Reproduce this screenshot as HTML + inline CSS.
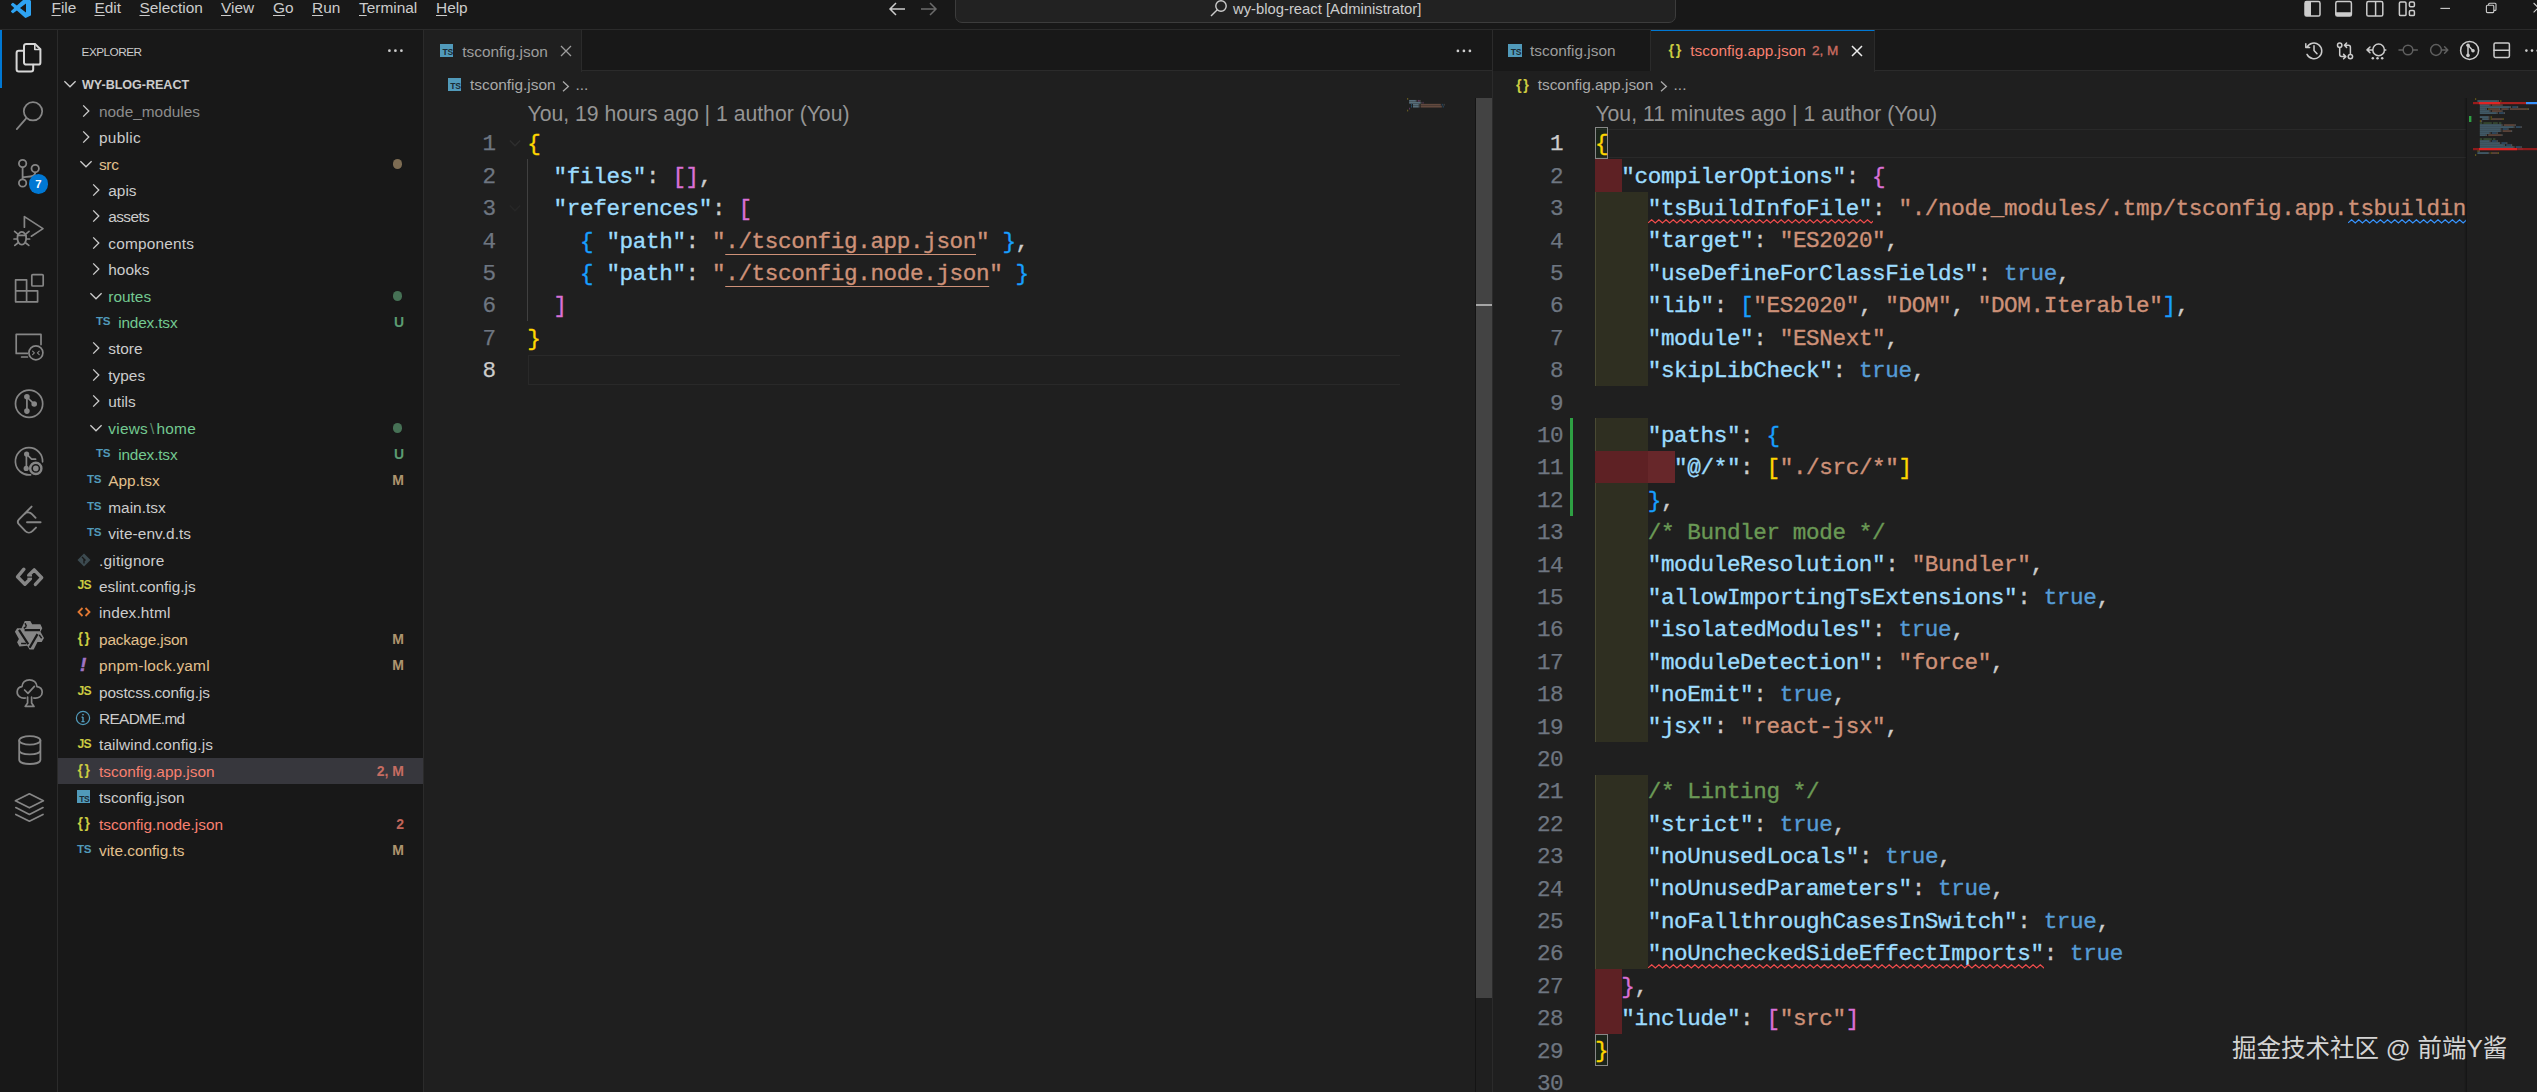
<!DOCTYPE html>
<html lang="en"><head><meta charset="utf-8"><title>tsconfig.app.json - wy-blog-react - Visual Studio Code</title>
<style>
*{box-sizing:border-box;margin:0;padding:0}
html,body{width:2537px;height:1092px;overflow:hidden;background:#181818;}
body{position:relative;font-family:"Liberation Sans", sans-serif;font-size:15.4px;color:#cccccc;-webkit-font-smoothing:antialiased}
.abs{position:absolute}
#titlebar{position:absolute;left:0;top:0;width:2537px;height:30px;background:#181818;border-bottom:1px solid #2b2b2b}
.menu{position:absolute;top:-2.7px;height:22px;line-height:22px;font-size:15.4px;color:#cccccc;white-space:nowrap}
.menu u{text-decoration:underline;text-underline-offset:2.3px;text-decoration-thickness:1.1px}
#cmd{position:absolute;left:955px;top:-9.4px;width:721px;height:32px;border:1px solid #3c3c3c;border-radius:7px;background:#222222}
#cmdtxt{position:absolute;left:1233px;top:-2px;height:22px;line-height:22px;font-size:14.8px;color:#cccccc;white-space:nowrap}
#activity{position:absolute;left:0;top:30px;width:58px;height:1062px;background:#181818;border-right:1px solid #2b2b2b}
#sidebar{position:absolute;left:58px;top:30px;width:366px;height:1062px;background:#181818;border-right:1px solid #2b2b2b}
.row{position:absolute;left:0;width:365px;height:26.4px;line-height:26.4px;white-space:nowrap;font-size:15.4px}
.row .lbl{position:absolute;top:1.2px}
.row .badge{position:absolute;right:19px;top:0.1px;font-size:14px;font-weight:bold;text-align:right}
.row .dot{position:absolute;left:334.8px;top:8.7px;width:9.4px;height:9.4px;border-radius:50%;opacity:.5}
.ic{position:absolute}
.ed{position:absolute;top:30px;height:1062px;background:#1f1f1f;overflow:hidden}
.tabs{position:absolute;left:0;top:0;right:0;height:41px;background:#181818;border-bottom:1px solid #2b2b2b}
.tab{position:absolute;top:0;height:41px;border-right:1px solid #2b2b2b;line-height:41px;font-size:15.4px;white-space:nowrap}
.crumb{position:absolute;left:0;right:0;top:41px;height:27px;line-height:27px;font-size:15.4px;color:#a9a9a9;white-space:nowrap}
.ln{position:absolute;padding-top:1.5px;height:32.4px;line-height:32.4px;font-family:"Liberation Mono", monospace;font-size:22.6px;letter-spacing:-0.36px;-webkit-text-stroke:0.25px;color:#6e7681;text-align:right;white-space:pre}
.cl{position:absolute;padding-top:1.5px;height:32.4px;line-height:32.4px;font-family:"Liberation Mono", monospace;font-size:22.6px;color:#cccccc;white-space:pre;letter-spacing:-0.36px;-webkit-text-stroke:0.35px}
.lens{position:absolute;height:32px;line-height:32px;font-size:21.2px;color:#959595;white-space:nowrap}
.k{color:#9cdcfe} .s{color:#ce9178} .b{color:#569cd6} .c{color:#6a9955}
.y{color:#ffd700} .p{color:#da70d6} .bl{color:#179fff}
.sqb{text-decoration:underline wavy #3794ff;text-decoration-thickness:1px;text-underline-offset:5px;text-decoration-skip-ink:none}
.sq{text-decoration:underline wavy #f14c4c;text-decoration-thickness:1px;text-underline-offset:5px;text-decoration-skip-ink:none}
.lk{text-decoration:underline;text-decoration-thickness:1.2px;text-underline-offset:6px;text-decoration-skip-ink:none}
</style></head>
<body>
<div id="titlebar">
<svg class="abs" style="left:10.5px;top:-1.9px" width="20" height="20" viewBox="0 0 24 24"><path fill="#2ea3f2" d="M23.15 2.587L18.21.21a1.494 1.494 0 0 0-1.705.29l-9.46 8.63-4.12-3.128a.999.999 0 0 0-1.276.057L.327 7.261A1 1 0 0 0 .326 8.74L3.899 12 .326 15.26a1 1 0 0 0 .001 1.479L1.65 17.94a.999.999 0 0 0 1.276.057l4.12-3.128 9.46 8.63a1.492 1.492 0 0 0 1.704.29l4.942-2.377A1.5 1.5 0 0 0 24 20.06V3.939a1.5 1.5 0 0 0-.85-1.352zm-5.146 14.861L10.826 12l7.178-5.448v10.896z"/></svg>
<div class="menu" style="left:51.5px"><u>F</u>ile</div>
<div class="menu" style="left:94.5px"><u>E</u>dit</div>
<div class="menu" style="left:139.5px"><u>S</u>election</div>
<div class="menu" style="left:221px"><u>V</u>iew</div>
<div class="menu" style="left:273px"><u>G</u>o</div>
<div class="menu" style="left:312px"><u>R</u>un</div>
<div class="menu" style="left:359px"><u>T</u>erminal</div>
<div class="menu" style="left:436px"><u>H</u>elp</div>
<svg class="abs" style="left:886px;top:0px" width="54" height="18" viewBox="0 0 54 18" fill="none" stroke-width="1.5"><path d="M19 9 H4 M10 3 L4 9 L10 15" stroke="#cccccc"/><path d="M35 9 H50 M44 3 L50 9 L44 15" stroke="#6b6b6b"/></svg>
<div id="cmd"></div>
<svg class="abs" style="left:1209px;top:-1px" width="20" height="20" viewBox="0 0 20 20" fill="none" stroke="#cccccc" stroke-width="1.4"><circle cx="12" cy="7" r="5.2"/><path d="M8.3 10.7 L2 17"/></svg>
<div id="cmdtxt">wy-blog-react [Administrator]</div>
<svg class="abs" style="left:2295px;top:0" width="242" height="29" viewBox="2295 0 242 29" fill="none" stroke="#cccccc" stroke-width="1.5">
<rect x="2305" y="1.6" width="15" height="14.4" rx="1.6"/><path d="M2305 3 a1.4 1.4 0 0 1 1.4 -1.4 H2311 V16 H2306.4 a1.4 1.4 0 0 1 -1.4 -1.4 Z" fill="#cccccc" stroke="none"/>
<rect x="2335.8" y="1.6" width="15.6" height="14.4" rx="1.6"/><path d="M2335.8 12.2 H2351.4 V14.6 a1.4 1.4 0 0 1 -1.4 1.4 H2337.2 a1.4 1.4 0 0 1 -1.4 -1.4 Z" fill="#cccccc" stroke="none"/>
<rect x="2366.8" y="1.6" width="16" height="14.4" rx="1.6"/><path d="M2375.6 1.6 V16"/>
<rect x="2399.4" y="2" width="6.6" height="13.6" rx="1.2"/><rect x="2409.4" y="2" width="5" height="4.8" rx="1.2"/><rect x="2409.4" y="10.6" width="5" height="5" rx="1.2"/>
<path d="M2440.4 8.4 H2450" stroke-width="1.1"/>
<g stroke-width="1.1"><rect x="2486.4" y="5.2" width="7.4" height="7.4" rx="1"/><path d="M2488.6 5 V4.2 a1 1 0 0 1 1 -1 H2495 a1 1 0 0 1 1 1 V9.4 a1 1 0 0 1 -1 1 H2494"/></g>
<path d="M2533.6 3 L2543 12.4 M2543 3 L2533.6 12.4" stroke-width="1.1"/>
</svg>
</div>
<div id="activity">
<div class="abs" style="left:0;top:0;width:2.4px;height:58px;background:#0078d4"></div>
<svg class="abs" style="left:0;top:0.0px" width="58" height="57.6" viewBox="0 30.0 58 57.6" fill="none" stroke="#d7d7d7" stroke-width="2.0" stroke-linecap="round" stroke-linejoin="round"><path d="M26.2 43.9 H35 L40.4 49.3 V62.4 a2.2 2.2 0 0 1 -2.2 2.2 H26.2 a2.2 2.2 0 0 1 -2.2 -2.2 V46.1 a2.2 2.2 0 0 1 2.2 -2.2 Z"/><path d="M34.8 44.2 V49.5 H40.2" stroke-width="1.6"/><path d="M24 50.7 H18.8 a2.2 2.2 0 0 0 -2.2 2.2 V69.2 a2.2 2.2 0 0 0 2.2 2.2 H31 a2.2 2.2 0 0 0 2.2 -2.2 V64.8"/></svg>
<svg class="abs" style="left:0;top:57.6px" width="58" height="57.6" viewBox="0 87.6 58 57.6" fill="none" stroke="#868686" stroke-width="1.75" stroke-linecap="round" stroke-linejoin="round"><circle cx="33" cy="110.9" r="9.2"/><path d="M26.4 117.8 L16.8 128.8"/></svg>
<svg class="abs" style="left:0;top:115.2px" width="58" height="57.6" viewBox="0 145.2 58 57.6" fill="none" stroke="#868686" stroke-width="1.8" stroke-linecap="round" stroke-linejoin="round"><circle cx="22.6" cy="163.8" r="3.7"/><circle cx="22.6" cy="183.2" r="3.7"/><circle cx="35.2" cy="168.8" r="3.7"/><path d="M22.6 167.6 V179.4 M35.2 172.6 C35.2 177 30 176.6 22.8 177.6"/></svg>
<div class="abs" style="left:28.6px;top:143.8px;width:19.8px;height:19.8px;border-radius:50%;background:#0078d4;color:#fff;font-size:11.4px;font-weight:bold;line-height:20px;text-align:center">7</div>
<svg class="abs" style="left:0;top:172.8px" width="58" height="57.6" viewBox="0 202.8 58 57.6" fill="none" stroke="#868686" stroke-width="1.7" stroke-linecap="round" stroke-linejoin="round"><path d="M24.4 227 V216.4 L43 228.4 L31.4 236"/><ellipse cx="21.8" cy="238" rx="4.4" ry="6.4"/><path d="M17.6 235.2 H26 M17.6 233.6 L14.6 231.2 M17.4 238.8 H14 M17.8 242.8 L14.8 245.2 M26 233.6 L29 231.2 M26.2 238.8 H29.6 M25.8 242.8 L28.8 245.2"/></svg>
<svg class="abs" style="left:0;top:230.4px" width="58" height="57.6" viewBox="0 260.4 58 57.6" fill="none" stroke="#868686" stroke-width="1.7" stroke-linecap="round" stroke-linejoin="round"><path d="M15.6 280.2 H26.6 V291.2 H37.6 V302.2 H15.6 Z M15.6 291.2 H26.6 V302.2"/><rect x="31.8" y="275" width="11.4" height="11.4" rx="1"/></svg>
<svg class="abs" style="left:0;top:288.0px" width="58" height="57.6" viewBox="0 318.0 58 57.6" fill="none" stroke="#868686" stroke-width="1.7" stroke-linecap="round" stroke-linejoin="round"><path d="M27.4 353.4 H16.2 V334.4 H41 V344.6 M21.6 357 H27.4"/><circle cx="35.9" cy="352.8" r="7"/><path d="M32.6 351.2 L34.4 352.9 L32.6 354.6 M39.2 351.2 L37.4 352.9 L39.2 354.6" stroke-width="1.1"/></svg>
<svg class="abs" style="left:0;top:345.6px" width="58" height="57.6" viewBox="0 375.6 58 57.6" fill="none" stroke="#868686" stroke-width="1.7" stroke-linecap="round" stroke-linejoin="round"><circle cx="29.1" cy="403.3" r="13.6"/><path d="M26.9 396.4 V410.6 M26.9 396.6 L34 403.4"/><g fill="#868686" stroke="none"><circle cx="26.9" cy="396.4" r="2.8"/><circle cx="26.9" cy="410.7" r="2.8"/><circle cx="34.2" cy="403.6" r="2.8"/></g></svg>
<svg class="abs" style="left:0;top:403.2px" width="58" height="57.6" viewBox="0 433.2 58 57.6" fill="none" stroke="#868686" stroke-width="1.7" stroke-linecap="round" stroke-linejoin="round"><path d="M30.6 475 A13.6 13.6 0 1 1 42.6 462"/><path d="M26.4 454.4 V468.4 M26.6 454.4 L31.6 459.4 H35.6"/><g fill="#868686" stroke="none"><circle cx="26.6" cy="454.2" r="2.6"/><circle cx="26.2" cy="468.6" r="2.6"/><circle cx="35.8" cy="468.6" r="2.8"/></g><circle cx="35.8" cy="468.6" r="5.6" stroke-width="2.4"/></svg>
<svg class="abs" style="left:0;top:460.8px" width="58" height="57.6" viewBox="0 490.8 58 57.6" fill="none" stroke="#868686" stroke-width="1.9" stroke-linecap="round" stroke-linejoin="round"><path d="M31.6 506.4 L19 519.2 a3.6 3.6 0 0 0 0 5 L25.4 531 a5 5 0 0 0 7 0 L36 527.4 M24.4 513.8 a5 5 0 0 1 7.6 0.2 L35.6 517.6 M27 522 H40.6"/></svg>
<svg class="abs" style="left:0;top:518.4px" width="58" height="57.6" viewBox="0 548.4 58 57.6" fill="none" stroke="#868686" stroke-width="3.4" stroke-linecap="round" stroke-linejoin="round"><path d="M23.9 569.6 L17.5 577.2 L24.9 584.6 L30.4 579.2 M28.8 575.6 L34.2 570.3 L41.7 578 L35.4 584.8"/><path d="M27.4 575.4 H32 V579.4 H27.4 Z" fill="#868686" stroke="none"/><path d="M26.2 577.5 H32.8" stroke="#181818" stroke-width="1.1" stroke-linecap="butt"/></svg>
<svg class="abs" style="left:0;top:576.0px" width="58" height="57.6" viewBox="0 606.0 58 57.6" fill="none" stroke="#868686" stroke-width="1" stroke-linecap="round" stroke-linejoin="round"><path d="M24.8 621.1 L30.3 621.1 L32.2 624.2 L40.4 624.2 L42.3 628.2 L40.4 631.8 L44.0 638.1 L41.7 641.9 L37.5 641.9 L33.7 649.5 L29.5 649.5 L27.2 645.7 L19.4 646.5 L17.1 642.3 L18.9 638.9 L14.9 631.8 L17.1 628.2 L21.5 628.2 Z" fill="#868686" stroke="none"/><path d="M24.6 630.1 L40.0 630.1 M19.0 629.9 L28.2 644.2 M37.5 634.1 L29.6 647.8" stroke="#181818" stroke-width="2.2" stroke-linecap="butt"/><path d="M25.1 623.2 L26.4 626.3 M26.4 626.3 L23.8 628.3 M39.2 634.9 L41.7 638.2 M21.1 643.6 L26.1 643.6" stroke="#181818" stroke-width="1.5" stroke-linecap="butt"/></svg>
<svg class="abs" style="left:0;top:633.6px" width="58" height="57.6" viewBox="0 663.6 58 57.6" fill="none" stroke="#868686" stroke-width="1.7" stroke-linecap="round" stroke-linejoin="round"><path d="M25.6 697.6 C20.6 698.6 16.8 695.2 17.2 691.2 C17.4 688.2 19.6 686.4 22 686.2 C22 682 25.4 679.4 29.4 679.4 C33.6 679.4 36.8 682.2 37 686.2 C40 686.6 42.2 688.8 42.2 691.8 C42.2 695.6 38.6 698.6 33.6 697.6"/><path d="M27.6 696.8 V702.6 L25.2 706 H34 L31.6 702.6 V696.8"/><path d="M24.6 689.6 L28 693 L34.4 686"/></svg>
<svg class="abs" style="left:0;top:691.2px" width="58" height="57.6" viewBox="0 721.2 58 57.6" fill="none" stroke="#868686" stroke-width="1.8" stroke-linecap="round" stroke-linejoin="round"><ellipse cx="29.8" cy="740.6" rx="10.6" ry="4.2"/><path d="M19.2 740.6 V760 C19.2 765.6 40.4 765.6 40.4 760 V740.6 M19.2 750.4 C19.2 756 40.4 756 40.4 750.4"/></svg>
<svg class="abs" style="left:0;top:748.8px" width="58" height="57.6" viewBox="0 778.8 58 57.6" fill="none" stroke="#868686" stroke-width="1.7" stroke-linecap="round" stroke-linejoin="round"><path d="M29.4 793.6 L43.4 800.6 L29.4 807.6 L15.4 800.6 Z M15.8 807.4 L29.4 814.2 L43 807.4 M15.8 814.2 L29.4 821 L43 814.2"/></svg>
</div>
<div id="sidebar">
<div class="abs" style="left:23.6px;top:12.8px;font-size:11.8px;line-height:18px;color:#cccccc;letter-spacing:-0.55px">EXPLORER</div>
<svg class="abs" style="left:328px;top:14px" width="20" height="12" viewBox="0 0 20 12" fill="#cccccc"><circle cx="3.4" cy="6.7" r="1.35"/><circle cx="9.4" cy="6.7" r="1.35"/><circle cx="15.4" cy="6.7" r="1.35"/></svg>
<div class="row" style="top:41.3px;">
<svg class="abs" style="left:2px;top:3.1999999999999993px" width="20" height="20" viewBox="-10 -10 20 20" fill="none" stroke="#cccccc" stroke-width="1.3"><path d="M-5.6 -2.8 L0 2.8 L5.6 -2.8"/></svg>
<span class="lbl" style="left:24px;font-weight:bold;font-size:12.6px;color:#cccccc;letter-spacing:-0.05px">WY-BLOG-REACT</span>
</div>
<div class="row" style="top:67.7px;">
<svg class="abs" style="left:18px;top:3.1999999999999993px" width="20" height="20" viewBox="-10 -10 20 20" fill="none" stroke="#cccccc" stroke-width="1.3"><path d="M-2.8 -5.6 L2.8 0 L-2.8 5.6"/></svg>
<span class="lbl" style="left:41px;color:#8c8c8c;letter-spacing:0px">node_modules</span>
</div>
<div class="row" style="top:94.1px;">
<svg class="abs" style="left:18px;top:3.1999999999999993px" width="20" height="20" viewBox="-10 -10 20 20" fill="none" stroke="#cccccc" stroke-width="1.3"><path d="M-2.8 -5.6 L2.8 0 L-2.8 5.6"/></svg>
<span class="lbl" style="left:41px;color:#cccccc;letter-spacing:0.3px">public</span>
</div>
<div class="row" style="top:120.5px;">
<svg class="abs" style="left:18px;top:3.1999999999999993px" width="20" height="20" viewBox="-10 -10 20 20" fill="none" stroke="#cccccc" stroke-width="1.3"><path d="M-5.6 -2.8 L0 2.8 L5.6 -2.8"/></svg>
<span class="lbl" style="left:41px;color:#e2c08d;letter-spacing:-0.333px">src</span>
<span class="dot" style="background:#e2c08d"></span>
</div>
<div class="row" style="top:146.9px;">
<svg class="abs" style="left:27.5px;top:3.1999999999999993px" width="20" height="20" viewBox="-10 -10 20 20" fill="none" stroke="#cccccc" stroke-width="1.3"><path d="M-2.8 -5.6 L2.8 0 L-2.8 5.6"/></svg>
<span class="lbl" style="left:50.3px;color:#cccccc;letter-spacing:0px">apis</span>
</div>
<div class="row" style="top:173.3px;">
<svg class="abs" style="left:27.5px;top:3.1999999999999993px" width="20" height="20" viewBox="-10 -10 20 20" fill="none" stroke="#cccccc" stroke-width="1.3"><path d="M-2.8 -5.6 L2.8 0 L-2.8 5.6"/></svg>
<span class="lbl" style="left:50.3px;color:#cccccc;letter-spacing:-0.6px">assets</span>
</div>
<div class="row" style="top:199.7px;">
<svg class="abs" style="left:27.5px;top:3.1999999999999993px" width="20" height="20" viewBox="-10 -10 20 20" fill="none" stroke="#cccccc" stroke-width="1.3"><path d="M-2.8 -5.6 L2.8 0 L-2.8 5.6"/></svg>
<span class="lbl" style="left:50.3px;color:#cccccc;letter-spacing:0.19px">components</span>
</div>
<div class="row" style="top:226.1px;">
<svg class="abs" style="left:27.5px;top:3.1999999999999993px" width="20" height="20" viewBox="-10 -10 20 20" fill="none" stroke="#cccccc" stroke-width="1.3"><path d="M-2.8 -5.6 L2.8 0 L-2.8 5.6"/></svg>
<span class="lbl" style="left:50.3px;color:#cccccc;letter-spacing:0px">hooks</span>
</div>
<div class="row" style="top:252.5px;">
<svg class="abs" style="left:27.5px;top:3.1999999999999993px" width="20" height="20" viewBox="-10 -10 20 20" fill="none" stroke="#cccccc" stroke-width="1.3"><path d="M-5.6 -2.8 L0 2.8 L5.6 -2.8"/></svg>
<span class="lbl" style="left:50.3px;color:#73c991;letter-spacing:0px">routes</span>
<span class="dot" style="background:#73c991"></span>
</div>
<div class="row" style="top:278.9px;">
<span class="abs" style="left:38px;top:-1px;font-size:11.6px;font-weight:bold;color:#519aba;letter-spacing:-0.3px">TS</span>
<span class="lbl" style="left:60.2px;color:#73c991;letter-spacing:-0.167px">index.tsx</span>
<span class="badge" style="color:#73c991;opacity:.74">U</span>
</div>
<div class="row" style="top:305.3px;">
<svg class="abs" style="left:27.5px;top:3.1999999999999993px" width="20" height="20" viewBox="-10 -10 20 20" fill="none" stroke="#cccccc" stroke-width="1.3"><path d="M-2.8 -5.6 L2.8 0 L-2.8 5.6"/></svg>
<span class="lbl" style="left:50.3px;color:#cccccc;letter-spacing:0px">store</span>
</div>
<div class="row" style="top:331.7px;">
<svg class="abs" style="left:27.5px;top:3.1999999999999993px" width="20" height="20" viewBox="-10 -10 20 20" fill="none" stroke="#cccccc" stroke-width="1.3"><path d="M-2.8 -5.6 L2.8 0 L-2.8 5.6"/></svg>
<span class="lbl" style="left:50.3px;color:#cccccc;letter-spacing:0px">types</span>
</div>
<div class="row" style="top:358.1px;">
<svg class="abs" style="left:27.5px;top:3.1999999999999993px" width="20" height="20" viewBox="-10 -10 20 20" fill="none" stroke="#cccccc" stroke-width="1.3"><path d="M-2.8 -5.6 L2.8 0 L-2.8 5.6"/></svg>
<span class="lbl" style="left:50.3px;color:#cccccc;letter-spacing:0px">utils</span>
</div>
<div class="row" style="top:384.5px;">
<svg class="abs" style="left:27.5px;top:3.1999999999999993px" width="20" height="20" viewBox="-10 -10 20 20" fill="none" stroke="#cccccc" stroke-width="1.3"><path d="M-5.6 -2.8 L0 2.8 L5.6 -2.8"/></svg>
<span class="lbl" style="left:50.3px;color:#73c991;letter-spacing:0.24px">views<span style="color:#5d8a6c;margin:0 2px 0 2px">\</span>home</span>
<span class="dot" style="background:#73c991"></span>
</div>
<div class="row" style="top:410.9px;">
<span class="abs" style="left:38px;top:-1px;font-size:11.6px;font-weight:bold;color:#519aba;letter-spacing:-0.3px">TS</span>
<span class="lbl" style="left:60.2px;color:#73c991;letter-spacing:-0.167px">index.tsx</span>
<span class="badge" style="color:#73c991;opacity:.74">U</span>
</div>
<div class="row" style="top:437.3px;">
<span class="abs" style="left:29px;top:-1px;font-size:11.6px;font-weight:bold;color:#519aba;letter-spacing:-0.3px">TS</span>
<span class="lbl" style="left:50.3px;color:#e2c08d;letter-spacing:0px">App.tsx</span>
<span class="badge" style="color:#e2c08d;opacity:.74">M</span>
</div>
<div class="row" style="top:463.7px;">
<span class="abs" style="left:29px;top:-1px;font-size:11.6px;font-weight:bold;color:#519aba;letter-spacing:-0.3px">TS</span>
<span class="lbl" style="left:50.3px;color:#cccccc;letter-spacing:0px">main.tsx</span>
</div>
<div class="row" style="top:490.1px;">
<span class="abs" style="left:29px;top:-1px;font-size:11.6px;font-weight:bold;color:#519aba;letter-spacing:-0.3px">TS</span>
<span class="lbl" style="left:50.3px;color:#cccccc;letter-spacing:0.077px">vite-env.d.ts</span>
</div>
<div class="row" style="top:516.5px;">
<svg class="abs" style="left:19px;top:6px" width="14" height="14" viewBox="0 0 14 14"><path d="M7 0.5 L13.5 7 L7 13.5 L0.5 7 Z" fill="#3c4a50"/><path d="M5 4 L8.5 7.5 M7 6 V10.5" stroke="#181818" stroke-width="1.3" fill="none"/></svg>
<span class="lbl" style="left:41px;color:#cccccc;letter-spacing:0.23px">.gitignore</span>
</div>
<div class="row" style="top:542.9px;">
<span class="abs" style="left:19.5px;top:-0.6px;font-size:12.2px;font-weight:bold;color:#cbcb41;letter-spacing:-0.9px">JS</span>
<span class="lbl" style="left:41px;color:#cccccc;letter-spacing:0px">eslint.config.js</span>
</div>
<div class="row" style="top:569.3px;">
<svg class="abs" style="left:19px;top:6px" width="14" height="14" viewBox="0 0 14 14" fill="none" stroke="#e37933" stroke-width="1.8"><path d="M5.5 3 L1.5 7 L5.5 11 M8.5 3 L12.5 7 L8.5 11"/></svg>
<span class="lbl" style="left:41px;color:#cccccc;letter-spacing:0.13px">index.html</span>
</div>
<div class="row" style="top:595.7px;">
<span class="abs" style="left:19.5px;top:-1px;font-size:14px;font-weight:bold;color:#cbcb41;letter-spacing:1.5px">{}</span>
<span class="lbl" style="left:41px;color:#e2c08d;letter-spacing:-0.167px">package.json</span>
<span class="badge" style="color:#e2c08d;opacity:.74">M</span>
</div>
<div class="row" style="top:622.1px;">
<span class="abs" style="left:22px;top:-0.5px;font-size:19px;font-weight:bold;font-style:italic;color:#a074c4;-webkit-text-stroke:0.5px">!</span>
<span class="lbl" style="left:41px;color:#e2c08d;letter-spacing:0.214px">pnpm-lock.yaml</span>
<span class="badge" style="color:#e2c08d;opacity:.74">M</span>
</div>
<div class="row" style="top:648.5px;">
<span class="abs" style="left:19.5px;top:-0.6px;font-size:12.2px;font-weight:bold;color:#cbcb41;letter-spacing:-0.9px">JS</span>
<span class="lbl" style="left:41px;color:#cccccc;letter-spacing:-0.124px">postcss.config.js</span>
</div>
<div class="row" style="top:674.9px;">
<svg class="abs" style=" left:17.4px;top:5.3px" width="16" height="16" viewBox="0 0 16 16" fill="none" stroke="#519aba" stroke-width="1.2"><circle cx="8" cy="8" r="6.6"/><path d="M8 7 V11.5 M6.6 7.2 H8 M6.4 11.6 H9.6" stroke-width="1.4"/><circle cx="8" cy="4.6" r="0.9" fill="#519aba" stroke="none"/></svg>
<span class="lbl" style="left:41px;color:#cccccc;letter-spacing:-0.667px">README.md</span>
</div>
<div class="row" style="top:701.3px;">
<span class="abs" style="left:19.5px;top:-0.6px;font-size:12.2px;font-weight:bold;color:#cbcb41;letter-spacing:-0.9px">JS</span>
<span class="lbl" style="left:41px;color:#cccccc;letter-spacing:0.106px">tailwind.config.js</span>
</div>
<div class="row" style="top:727.7px;background:#37373d;">
<span class="abs" style="left:19.5px;top:-1px;font-size:14px;font-weight:bold;color:#cbcb41;letter-spacing:1.5px">{}</span>
<span class="lbl" style="left:41px;color:#f88070;letter-spacing:0px">tsconfig.app.json</span>
<span class="badge" style="color:#f88070;opacity:.74">2, M</span>
</div>
<div class="row" style="top:754.1px;">
<span class="abs" style="left:18.7px;top:5.6px;width:13.5px;height:13.5px;background:#519aba;"></span><span class="abs" style="left:21.2px;top:2.3px;font-size:8.5px;font-weight:bold;color:#1b2b34;letter-spacing:-0.4px">TS</span>
<span class="lbl" style="left:41px;color:#cccccc;letter-spacing:0px">tsconfig.json</span>
</div>
<div class="row" style="top:780.5px;">
<span class="abs" style="left:19.5px;top:-1px;font-size:14px;font-weight:bold;color:#cbcb41;letter-spacing:1.5px">{}</span>
<span class="lbl" style="left:41px;color:#f88070;letter-spacing:0px">tsconfig.node.json</span>
<span class="badge" style="color:#f88070;opacity:.74">2</span>
</div>
<div class="row" style="top:806.9px;">
<span class="abs" style="left:19px;top:-1px;font-size:11.6px;font-weight:bold;color:#519aba;letter-spacing:-0.3px">TS</span>
<span class="lbl" style="left:41px;color:#e2c08d;letter-spacing:0px">vite.config.ts</span>
<span class="badge" style="color:#e2c08d;opacity:.74">M</span>
</div>
</div>
<div class="ed" id="ed1" style="left:424px;width:1068px">
<div class="tabs">
<div class="tab" style="left:0;width:158px;background:#1f1f1f;height:42px"></div>
<span class="abs" style="left:16px;top:14px;width:13.4px;height:13.4px;background:#519aba"></span><span class="abs" style="left:18.6px;top:17.4px;font-size:8.6px;line-height:10px;font-weight:bold;color:#1b2b34;letter-spacing:-0.4px">TS</span>
<div class="abs" style="left:38.30000000000001px;top:0;height:41px;line-height:43px;color:#9d9d9d;font-size:15.4px;white-space:nowrap">tsconfig.json</div>
<svg class="abs" style="left:134.5px;top:13.899999999999999px" width="14" height="14" viewBox="0 0 14 14" fill="none" stroke="#9d9d9d" stroke-width="1.3"><path d="M2 2 L12 12 M12 2 L2 12"/></svg>
<svg class="abs" style="left:1030px;top:14px" width="20" height="12" viewBox="0 0 20 12" fill="#cccccc"><circle cx="3.9" cy="6.9" r="1.35"/><circle cx="9.9" cy="6.9" r="1.35"/><circle cx="15.9" cy="6.9" r="1.35"/></svg>
</div>
<span class="abs" style="left:23.69999999999999px;top:48px;width:13.4px;height:13.4px;background:#519aba"></span><span class="abs" style="left:26.29999999999999px;top:51.4px;font-size:8.6px;line-height:10px;font-weight:bold;color:#1b2b34;letter-spacing:-0.4px">TS</span>
<div class="abs" style="left:46px;top:41.3px;height:27px;line-height:27px;color:#a9a9a9;font-size:15.4px;white-space:nowrap">tsconfig.json</div>
<svg class="abs" style="left:135px;top:48px" width="14" height="16" viewBox="0 0 14 16" fill="none" stroke="#a9a9a9" stroke-width="1.3"><path d="M4 3.6 L9.4 8.4 L4 13.2"/></svg>
<div class="abs" style="left:151.5px;top:41.3px;height:27px;line-height:27px;color:#a9a9a9;font-size:15.4px;white-space:nowrap">...</div>
<div class="lens" style="left:103.5px;top:68px">You, 19 hours ago | 1 author (You)</div>
<div class="abs" style="left:103.5px;top:325px;width:872.5px;height:30.4px;border:1.7px solid #292929;border-right:none"></div>
<div class="abs" style="left:103px;top:129.2px;width:1.2px;height:162.0px;background:#404040"></div>
<div class="ln" style="left:11.600000000000023px;width:60px;top:96.8px">1</div>
<div class="cl" style="left:103.20000000000005px;top:96.8px"><span class="y">{</span></div>
<div class="ln" style="left:11.600000000000023px;width:60px;top:129.2px">2</div>
<div class="cl" style="left:129.60000000000002px;top:129.2px"><span class="k">&quot;files&quot;</span>: <span class="p">[]</span>,</div>
<div class="ln" style="left:11.600000000000023px;width:60px;top:161.6px">3</div>
<div class="cl" style="left:129.60000000000002px;top:161.6px"><span class="k">&quot;references&quot;</span>: <span class="p">[</span></div>
<div class="ln" style="left:11.600000000000023px;width:60px;top:194.0px">4</div>
<div class="cl" style="left:156.0px;top:194.0px"><span class="bl">{</span> <span class="k">&quot;path&quot;</span>: <span class="s">&quot;<span class="lk">./tsconfig.app.json</span>&quot;</span> <span class="bl">}</span>,</div>
<div class="ln" style="left:11.600000000000023px;width:60px;top:226.4px">5</div>
<div class="cl" style="left:156.0px;top:226.4px"><span class="bl">{</span> <span class="k">&quot;path&quot;</span>: <span class="s">&quot;<span class="lk">./tsconfig.node.json</span>&quot;</span> <span class="bl">}</span></div>
<div class="ln" style="left:11.600000000000023px;width:60px;top:258.8px">6</div>
<div class="cl" style="left:129.60000000000002px;top:258.8px"><span class="p">]</span></div>
<div class="ln" style="left:11.600000000000023px;width:60px;top:291.2px">7</div>
<div class="cl" style="left:103.20000000000005px;top:291.2px"><span class="y">}</span></div>
<div class="ln" style="left:11.600000000000023px;width:60px;top:323.6px;color:#cccccc">8</div>
<svg class="abs" style="left:83px;top:105.4px" width="16" height="16" viewBox="-8 -8 16 16" fill="none" stroke="#2e2e2e" stroke-width="1.4"><path d="M-5.2 -2.4 L0 2.8 L5.2 -2.4"/></svg>
<svg class="abs" style="left:83px;top:170.2px" width="16" height="16" viewBox="-8 -8 16 16" fill="none" stroke="#272727" stroke-width="1.4"><path d="M-5.2 -2.4 L0 2.8 L5.2 -2.4"/></svg>
<svg class="abs" style="left:981px;top:67px" width="46" height="16" viewBox="0 0 46 16" opacity=".6"><rect x="2.20" y="1.00" width="0.96" height="1.75" fill="#a89423" opacity="1"/><rect x="4.12" y="2.95" width="6.72" height="1.75" fill="#7fa3b8" opacity="1"/><rect x="10.84" y="2.95" width="0.96" height="1.75" fill="#9a9a9a" opacity="0.6"/><rect x="12.76" y="2.95" width="1.92" height="1.75" fill="#8c4f8a" opacity="1"/><rect x="14.68" y="2.95" width="0.96" height="1.75" fill="#9a9a9a" opacity="0.6"/><rect x="4.12" y="4.90" width="11.52" height="1.75" fill="#7fa3b8" opacity="1"/><rect x="15.64" y="4.90" width="0.96" height="1.75" fill="#9a9a9a" opacity="0.6"/><rect x="17.56" y="4.90" width="0.96" height="1.75" fill="#8c4f8a" opacity="1"/><rect x="6.04" y="6.85" width="0.96" height="1.75" fill="#2a6ea0" opacity="1"/><rect x="7.96" y="6.85" width="5.76" height="1.75" fill="#7fa3b8" opacity="1"/><rect x="13.72" y="6.85" width="0.96" height="1.75" fill="#9a9a9a" opacity="0.6"/><rect x="15.64" y="6.85" width="20.16" height="1.75" fill="#8f6654" opacity="1"/><rect x="36.76" y="6.85" width="0.96" height="1.75" fill="#2a6ea0" opacity="1"/><rect x="6.04" y="8.80" width="0.96" height="1.75" fill="#2a6ea0" opacity="1"/><rect x="7.96" y="8.80" width="5.76" height="1.75" fill="#7fa3b8" opacity="1"/><rect x="13.72" y="8.80" width="0.96" height="1.75" fill="#9a9a9a" opacity="0.6"/><rect x="15.64" y="8.80" width="21.12" height="1.75" fill="#8f6654" opacity="1"/><rect x="37.72" y="8.80" width="0.96" height="1.75" fill="#2a6ea0" opacity="1"/><rect x="38.68" y="6.85" width="0.96" height="1.75" fill="#9a9a9a" opacity="0.6"/><rect x="4.12" y="10.75" width="0.96" height="1.75" fill="#8c4f8a" opacity="1"/><rect x="2.20" y="12.70" width="0.96" height="1.75" fill="#a89423" opacity="1"/></svg>
<div class="abs" style="left:1051px;top:68px;width:1px;height:994px;background:#141414"></div>
<div class="abs" style="left:1052px;top:68px;width:16px;height:899.7px;background:#434343"></div>
<div class="abs" style="left:1052px;top:273.8px;width:16px;height:2.4px;background:#a6a6a6"></div>
</div>
<div class="abs" style="left:1492px;top:30px;width:1px;height:1062px;background:#2b2b2b"></div>
<div class="ed" id="ed2" style="left:1493px;width:1044px">
<div class="tabs">
<div class="tab" style="left:0;width:157.5px;background:#181818"></div>
<div class="tab" style="left:157.5px;width:224.0px;background:#1f1f1f;height:42px;border-top:1.5px solid #0078d4"></div>
<span class="abs" style="left:15.200000000000045px;top:14px;width:13.4px;height:13.4px;background:#519aba"></span><span class="abs" style="left:17.800000000000047px;top:17.4px;font-size:8.6px;line-height:10px;font-weight:bold;color:#1b2b34;letter-spacing:-0.4px">TS</span>
<div class="abs" style="left:37px;top:0;height:41px;line-height:42px;color:#9d9d9d;white-space:nowrap">tsconfig.json</div>
<span class="abs" style="left:175.5px;top:9px;height:22px;line-height:22px;font-size:14.5px;font-weight:bold;color:#cbcb41;letter-spacing:1.5px">{}</span>
<div class="abs" style="left:197.29999999999995px;top:0;height:41px;line-height:42px;color:#f88070;white-space:nowrap">tsconfig.app.json</div>
<div class="abs" style="left:319px;top:0;height:41px;line-height:42px;color:#c96c61;font-size:13.6px;-webkit-text-stroke:0.35px;white-space:nowrap">2, M</div>
<svg class="abs" style="left:357px;top:13.899999999999999px" width="14" height="14" viewBox="0 0 14 14" fill="none" stroke="#ececec" stroke-width="1.5"><path d="M2 2 L12 12 M12 2 L2 12"/></svg>
<svg class="abs" style="left:802px;top:6px" width="242" height="30" viewBox="2295 36 242 30" fill="none" stroke="#cccccc" stroke-width="1.5" stroke-linecap="round" stroke-linejoin="round">
<path d="M2307 47.4 A7.8 7.8 0 1 1 2307 54.4 M2305.8 43.8 V47.6 H2309.6 M2314 45.8 V50.6 L2317 53.8"/>
<circle cx="2339.7" cy="45.2" r="2.2"/><circle cx="2350.4" cy="56.6" r="2.2"/><path d="M2339.7 47.6 V54.6 a2 2 0 0 0 2 2 H2345.6 M2343.6 54.4 L2345.8 56.6 L2343.6 58.8 M2350.4 54.2 V47.2 a2 2 0 0 0 -2 -2 H2344.6 M2346.6 43 L2344.4 45.2 L2346.6 47.4"/>
<circle cx="2378.6" cy="49.9" r="5.8"/><path d="M2372.4 49.9 H2367.2 M2370 47 L2367 49.9 L2370 52.8 M2384.6 49.9 H2385.8"/><g fill="#cccccc" stroke="none"><circle cx="2372.8" cy="58.3" r="1.25"/><circle cx="2377.5" cy="58.3" r="1.25"/><circle cx="2382.2" cy="58.3" r="1.25"/></g>
<g stroke="#5f5f5f"><circle cx="2408" cy="50" r="4.8"/><path d="M2399 50 H2403 M2413 50 H2417.4"/></g>
<g stroke="#5f5f5f"><circle cx="2436" cy="50" r="5.4"/><path d="M2441.6 50 H2447.6 M2444.6 46.8 L2447.8 50 L2444.6 53.2"/></g>
<circle cx="2469.6" cy="50.4" r="9"/><path d="M2468 45.4 V55.2 M2468.2 45.6 L2472.8 50.4"/><g fill="#cccccc" stroke="none"><circle cx="2468" cy="45.3" r="1.8"/><circle cx="2468" cy="55.4" r="1.8"/><circle cx="2473" cy="50.7" r="1.8"/></g>
<rect x="2494" y="43" width="15.4" height="14.4" rx="1.4"/><path d="M2494 50.2 H2509.4"/>
<g fill="#cccccc" stroke="none"><circle cx="2526.4" cy="50.6" r="1.3"/><circle cx="2532" cy="50.6" r="1.3"/><circle cx="2537.6" cy="50.6" r="1.3"/></g>
</svg>
</div>
<span class="abs" style="left:23px;top:44px;height:22px;line-height:22px;font-size:14.5px;font-weight:bold;color:#cbcb41;letter-spacing:1.5px">{}</span>
<div class="abs" style="left:44.700000000000045px;top:41.3px;height:27px;line-height:27px;color:#a9a9a9;white-space:nowrap">tsconfig.app.json</div>
<svg class="abs" style="left:163.5px;top:48px" width="14" height="16" viewBox="0 0 14 16" fill="none" stroke="#a9a9a9" stroke-width="1.3"><path d="M4 3.6 L9.4 8.4 L4 13.2"/></svg>
<div class="abs" style="left:180.5999999999999px;top:41.3px;height:27px;line-height:27px;color:#a9a9a9;white-space:nowrap">...</div>
<div class="lens" style="left:102.40000000000009px;top:68px">You, 11 minutes ago | 1 author (You)</div>
<div class="abs" style="left:0;top:96.8px;width:973px;height:965.2px;overflow:hidden">
<div class="abs" style="left:102.40000000000009px;top:2.2px;width:900px;height:29.4px;border-top:1.7px solid #292929;border-bottom:1.7px solid #292929"></div>
<div class="abs" style="left:102.40000000000009px;top:32.4px;width:26.4px;height:32.4px;background:#5e2124"></div>
<div class="abs" style="left:102.40000000000009px;top:64.8px;width:52.8px;height:194.4px;background:#2f2f21"></div>
<div class="abs" style="left:102.40000000000009px;top:291.6px;width:52.8px;height:32.4px;background:#2f2f21"></div>
<div class="abs" style="left:102.40000000000009px;top:324.0px;width:52.8px;height:32.4px;background:#5e2124"></div>
<div class="abs" style="left:155.2000000000001px;top:324.0px;width:26.4px;height:32.4px;background:#67272a"></div>
<div class="abs" style="left:102.40000000000009px;top:356.4px;width:52.8px;height:259.2px;background:#2f2f21"></div>
<div class="abs" style="left:102.40000000000009px;top:648.0px;width:52.8px;height:194.4px;background:#2f2f21"></div>
<div class="abs" style="left:102.40000000000009px;top:842.4px;width:26.4px;height:64.8px;background:#5e2124"></div>
<div class="abs" style="left:101.8000000000001px;top:64.8px;width:1.2px;height:194.4px;background:#4a4a33"></div>
<div class="abs" style="left:101.8000000000001px;top:291.6px;width:1.2px;height:32.4px;background:#4a4a33"></div>
<div class="abs" style="left:101.8000000000001px;top:356.4px;width:1.2px;height:259.2px;background:#4a4a33"></div>
<div class="abs" style="left:101.8000000000001px;top:648.0px;width:1.2px;height:194.4px;background:#4a4a33"></div>
<div class="abs" style="left:101.8000000000001px;top:0.2px;width:13.0px;height:31.6px;border:1.2px solid #888888;background:rgba(0,100,0,0.1)"></div>
<div class="abs" style="left:101.8000000000001px;top:907.4px;width:13.0px;height:31.6px;border:1.2px solid #888888;background:rgba(0,100,0,0.1)"></div>
<div class="cl" style="left:101.9px;top:0.0px"><span class="y">{</span></div>
<div class="cl" style="left:128.3px;top:32.4px"><span class="k">&quot;compilerOptions&quot;</span>: <span class="p">{</span></div>
<div class="cl" style="left:154.7px;top:64.8px"><span class="k">&quot;tsBuildInfoFile&quot;</span>: <span class="s">&quot;./node_modules/.tmp/tsconfig.app.tsbuildinfo&quot;</span>,</div>
<div class="cl" style="left:154.7px;top:97.2px"><span class="k">&quot;target&quot;</span>: <span class="s">&quot;ES2020&quot;</span>,</div>
<div class="cl" style="left:154.7px;top:129.6px"><span class="k">&quot;useDefineForClassFields&quot;</span>: <span class="b">true</span>,</div>
<div class="cl" style="left:154.7px;top:162.0px"><span class="k">&quot;lib&quot;</span>: <span class="bl">[</span><span class="s">&quot;ES2020&quot;</span>, <span class="s">&quot;DOM&quot;</span>, <span class="s">&quot;DOM.Iterable&quot;</span><span class="bl">]</span>,</div>
<div class="cl" style="left:154.7px;top:194.4px"><span class="k">&quot;module&quot;</span>: <span class="s">&quot;ESNext&quot;</span>,</div>
<div class="cl" style="left:154.7px;top:226.8px"><span class="k">&quot;skipLibCheck&quot;</span>: <span class="b">true</span>,</div>
<div class="cl" style="left:154.7px;top:291.6px"><span class="k">&quot;paths&quot;</span>: <span class="bl">{</span></div>
<div class="cl" style="left:181.1px;top:324.0px"><span class="k">&quot;@/*&quot;</span>: <span class="y">[</span><span class="s">&quot;./src/*&quot;</span><span class="y">]</span></div>
<div class="cl" style="left:154.7px;top:356.4px"><span class="bl">}</span>,</div>
<div class="cl" style="left:154.7px;top:388.8px"><span class="c">/* Bundler mode */</span></div>
<div class="cl" style="left:154.7px;top:421.2px"><span class="k">&quot;moduleResolution&quot;</span>: <span class="s">&quot;Bundler&quot;</span>,</div>
<div class="cl" style="left:154.7px;top:453.6px"><span class="k">&quot;allowImportingTsExtensions&quot;</span>: <span class="b">true</span>,</div>
<div class="cl" style="left:154.7px;top:486.0px"><span class="k">&quot;isolatedModules&quot;</span>: <span class="b">true</span>,</div>
<div class="cl" style="left:154.7px;top:518.4px"><span class="k">&quot;moduleDetection&quot;</span>: <span class="s">&quot;force&quot;</span>,</div>
<div class="cl" style="left:154.7px;top:550.8px"><span class="k">&quot;noEmit&quot;</span>: <span class="b">true</span>,</div>
<div class="cl" style="left:154.7px;top:583.2px"><span class="k">&quot;jsx&quot;</span>: <span class="s">&quot;react-jsx&quot;</span>,</div>
<div class="cl" style="left:154.7px;top:648.0px"><span class="c">/* Linting */</span></div>
<div class="cl" style="left:154.7px;top:680.4px"><span class="k">&quot;strict&quot;</span>: <span class="b">true</span>,</div>
<div class="cl" style="left:154.7px;top:712.8px"><span class="k">&quot;noUnusedLocals&quot;</span>: <span class="b">true</span>,</div>
<div class="cl" style="left:154.7px;top:745.2px"><span class="k">&quot;noUnusedParameters&quot;</span>: <span class="b">true</span>,</div>
<div class="cl" style="left:154.7px;top:777.6px"><span class="k">&quot;noFallthroughCasesInSwitch&quot;</span>: <span class="b">true</span>,</div>
<div class="cl" style="left:154.7px;top:810.0px"><span class="k">&quot;noUncheckedSideEffectImports&quot;</span>: <span class="b">true</span></div>
<div class="cl" style="left:128.3px;top:842.4px"><span class="p">}</span>,</div>
<div class="cl" style="left:128.3px;top:874.8px"><span class="k">&quot;include&quot;</span>: <span class="p">[</span><span class="s">&quot;src&quot;</span><span class="p">]</span></div>
<div class="cl" style="left:101.9px;top:907.2px"><span class="y">}</span></div>
<svg class="abs" style="left:155.2px;top:92.4px" width="224.4" height="4.8" viewBox="0 0 224.4 4.8" fill="none" stroke="#f14c4c" stroke-width="1.15"><path d="M0.0 3.9 L3.6 0.7 L7.2 3.9 L10.8 0.7 L14.4 3.9 L18.0 0.7 L21.6 3.9 L25.2 0.7 L28.8 3.9 L32.4 0.7 L36.0 3.9 L39.6 0.7 L43.2 3.9 L46.8 0.7 L50.4 3.9 L54.0 0.7 L57.6 3.9 L61.2 0.7 L64.8 3.9 L68.4 0.7 L72.0 3.9 L75.6 0.7 L79.2 3.9 L82.8 0.7 L86.4 3.9 L90.0 0.7 L93.6 3.9 L97.2 0.7 L100.8 3.9 L104.4 0.7 L108.0 3.9 L111.6 0.7 L115.2 3.9 L118.8 0.7 L122.4 3.9 L126.0 0.7 L129.6 3.9 L133.2 0.7 L136.8 3.9 L140.4 0.7 L144.0 3.9 L147.6 0.7 L151.2 3.9 L154.8 0.7 L158.4 3.9 L162.0 0.7 L165.6 3.9 L169.2 0.7 L172.8 3.9 L176.4 0.7 L180.0 3.9 L183.6 0.7 L187.2 3.9 L190.8 0.7 L194.4 3.9 L198.0 0.7 L201.6 3.9 L205.2 0.7 L208.8 3.9 L212.4 0.7 L216.0 3.9 L219.6 0.7 L223.2 3.9 L226.8 0.7"/></svg>
<svg class="abs" style="left:854.8px;top:92.4px" width="145.2" height="4.8" viewBox="0 0 145.2 4.8" fill="none" stroke="#3794ff" stroke-width="1.15"><path d="M0.0 3.9 L3.6 0.7 L7.2 3.9 L10.8 0.7 L14.4 3.9 L18.0 0.7 L21.6 3.9 L25.2 0.7 L28.8 3.9 L32.4 0.7 L36.0 3.9 L39.6 0.7 L43.2 3.9 L46.8 0.7 L50.4 3.9 L54.0 0.7 L57.6 3.9 L61.2 0.7 L64.8 3.9 L68.4 0.7 L72.0 3.9 L75.6 0.7 L79.2 3.9 L82.8 0.7 L86.4 3.9 L90.0 0.7 L93.6 3.9 L97.2 0.7 L100.8 3.9 L104.4 0.7 L108.0 3.9 L111.6 0.7 L115.2 3.9 L118.8 0.7 L122.4 3.9 L126.0 0.7 L129.6 3.9 L133.2 0.7 L136.8 3.9 L140.4 0.7 L144.0 3.9 L147.6 0.7"/></svg>
<svg class="abs" style="left:155.2px;top:837.6px" width="396.0" height="4.8" viewBox="0 0 396.0 4.8" fill="none" stroke="#f14c4c" stroke-width="1.15"><path d="M0.0 3.9 L3.6 0.7 L7.2 3.9 L10.8 0.7 L14.4 3.9 L18.0 0.7 L21.6 3.9 L25.2 0.7 L28.8 3.9 L32.4 0.7 L36.0 3.9 L39.6 0.7 L43.2 3.9 L46.8 0.7 L50.4 3.9 L54.0 0.7 L57.6 3.9 L61.2 0.7 L64.8 3.9 L68.4 0.7 L72.0 3.9 L75.6 0.7 L79.2 3.9 L82.8 0.7 L86.4 3.9 L90.0 0.7 L93.6 3.9 L97.2 0.7 L100.8 3.9 L104.4 0.7 L108.0 3.9 L111.6 0.7 L115.2 3.9 L118.8 0.7 L122.4 3.9 L126.0 0.7 L129.6 3.9 L133.2 0.7 L136.8 3.9 L140.4 0.7 L144.0 3.9 L147.6 0.7 L151.2 3.9 L154.8 0.7 L158.4 3.9 L162.0 0.7 L165.6 3.9 L169.2 0.7 L172.8 3.9 L176.4 0.7 L180.0 3.9 L183.6 0.7 L187.2 3.9 L190.8 0.7 L194.4 3.9 L198.0 0.7 L201.6 3.9 L205.2 0.7 L208.8 3.9 L212.4 0.7 L216.0 3.9 L219.6 0.7 L223.2 3.9 L226.8 0.7 L230.4 3.9 L234.0 0.7 L237.6 3.9 L241.2 0.7 L244.8 3.9 L248.4 0.7 L252.0 3.9 L255.6 0.7 L259.2 3.9 L262.8 0.7 L266.4 3.9 L270.0 0.7 L273.6 3.9 L277.2 0.7 L280.8 3.9 L284.4 0.7 L288.0 3.9 L291.6 0.7 L295.2 3.9 L298.8 0.7 L302.4 3.9 L306.0 0.7 L309.6 3.9 L313.2 0.7 L316.8 3.9 L320.4 0.7 L324.0 3.9 L327.6 0.7 L331.2 3.9 L334.8 0.7 L338.4 3.9 L342.0 0.7 L345.6 3.9 L349.2 0.7 L352.8 3.9 L356.4 0.7 L360.0 3.9 L363.6 0.7 L367.2 3.9 L370.8 0.7 L374.4 3.9 L378.0 0.7 L381.6 3.9 L385.2 0.7 L388.8 3.9 L392.4 0.7 L396.0 3.9 L399.6 0.7"/></svg>
</div>
<div class="ln" style="left:10.299999999999955px;width:60px;top:96.8px;color:#cccccc">1</div>
<div class="ln" style="left:10.299999999999955px;width:60px;top:129.2px">2</div>
<div class="ln" style="left:10.299999999999955px;width:60px;top:161.6px">3</div>
<div class="ln" style="left:10.299999999999955px;width:60px;top:194.0px">4</div>
<div class="ln" style="left:10.299999999999955px;width:60px;top:226.4px">5</div>
<div class="ln" style="left:10.299999999999955px;width:60px;top:258.8px">6</div>
<div class="ln" style="left:10.299999999999955px;width:60px;top:291.2px">7</div>
<div class="ln" style="left:10.299999999999955px;width:60px;top:323.6px">8</div>
<div class="ln" style="left:10.299999999999955px;width:60px;top:356.0px">9</div>
<div class="ln" style="left:10.299999999999955px;width:60px;top:388.4px">10</div>
<div class="ln" style="left:10.299999999999955px;width:60px;top:420.8px">11</div>
<div class="ln" style="left:10.299999999999955px;width:60px;top:453.2px">12</div>
<div class="ln" style="left:10.299999999999955px;width:60px;top:485.6px">13</div>
<div class="ln" style="left:10.299999999999955px;width:60px;top:518.0px">14</div>
<div class="ln" style="left:10.299999999999955px;width:60px;top:550.4px">15</div>
<div class="ln" style="left:10.299999999999955px;width:60px;top:582.8px">16</div>
<div class="ln" style="left:10.299999999999955px;width:60px;top:615.2px">17</div>
<div class="ln" style="left:10.299999999999955px;width:60px;top:647.6px">18</div>
<div class="ln" style="left:10.299999999999955px;width:60px;top:680.0px">19</div>
<div class="ln" style="left:10.299999999999955px;width:60px;top:712.4px">20</div>
<div class="ln" style="left:10.299999999999955px;width:60px;top:744.8px">21</div>
<div class="ln" style="left:10.299999999999955px;width:60px;top:777.2px">22</div>
<div class="ln" style="left:10.299999999999955px;width:60px;top:809.6px">23</div>
<div class="ln" style="left:10.299999999999955px;width:60px;top:842.0px">24</div>
<div class="ln" style="left:10.299999999999955px;width:60px;top:874.4px">25</div>
<div class="ln" style="left:10.299999999999955px;width:60px;top:906.8px">26</div>
<div class="ln" style="left:10.299999999999955px;width:60px;top:939.2px">27</div>
<div class="ln" style="left:10.299999999999955px;width:60px;top:971.6px">28</div>
<div class="ln" style="left:10.299999999999955px;width:60px;top:1004.0px">29</div>
<div class="ln" style="left:10.299999999999955px;width:60px;top:1036.4px">30</div>
<div class="abs" style="left:76.70000000000005px;top:388.4px;width:3.4px;height:97.2px;background:#2ea043"></div>
<div class="abs" style="left:971px;top:68px;width:3px;height:994px;background:linear-gradient(to right,rgba(0,0,0,0),rgba(0,0,0,.35))"></div>
<svg class="abs" style="left:974px;top:68px" width="70" height="64" viewBox="0 0 70 64">
<rect x="8.0" y="0.3" width="1.2" height="1.5" fill="#857412" opacity=".8"/>
<rect x="10.4" y="2.3" width="20.4" height="1.5" fill="#54788c" opacity=".8"/>
<rect x="30.8" y="2.3" width="1.2" height="1.5" fill="#6a6a6a" opacity=".8"/>
<rect x="33.2" y="2.3" width="1.2" height="1.5" fill="#857412" opacity=".8"/>
<rect x="12.8" y="4.3" width="20.4" height="1.5" fill="#54788c" opacity=".8"/>
<rect x="33.2" y="4.3" width="1.2" height="1.5" fill="#6a6a6a" opacity=".8"/>
<rect x="35.6" y="4.3" width="34.4" height="1.5" fill="#7a5646" opacity=".8"/>
<rect x="12.8" y="6.3" width="9.6" height="1.5" fill="#54788c" opacity=".8"/>
<rect x="22.4" y="6.3" width="1.2" height="1.5" fill="#6a6a6a" opacity=".8"/>
<rect x="24.8" y="6.3" width="9.6" height="1.5" fill="#7a5646" opacity=".8"/>
<rect x="34.4" y="6.3" width="1.2" height="1.5" fill="#6a6a6a" opacity=".8"/>
<rect x="12.8" y="8.3" width="30.0" height="1.5" fill="#54788c" opacity=".8"/>
<rect x="42.8" y="8.3" width="1.2" height="1.5" fill="#6a6a6a" opacity=".8"/>
<rect x="45.2" y="8.3" width="4.8" height="1.5" fill="#365c7e" opacity=".8"/>
<rect x="50.0" y="8.3" width="1.2" height="1.5" fill="#6a6a6a" opacity=".8"/>
<rect x="12.8" y="10.3" width="6.0" height="1.5" fill="#54788c" opacity=".8"/>
<rect x="18.8" y="10.3" width="1.2" height="1.5" fill="#6a6a6a" opacity=".8"/>
<rect x="21.2" y="10.3" width="1.2" height="1.5" fill="#857412" opacity=".8"/>
<rect x="22.4" y="10.3" width="9.6" height="1.5" fill="#7a5646" opacity=".8"/>
<rect x="32.0" y="10.3" width="1.2" height="1.5" fill="#6a6a6a" opacity=".8"/>
<rect x="34.4" y="10.3" width="6.0" height="1.5" fill="#7a5646" opacity=".8"/>
<rect x="40.4" y="10.3" width="1.2" height="1.5" fill="#6a6a6a" opacity=".8"/>
<rect x="42.8" y="10.3" width="16.8" height="1.5" fill="#7a5646" opacity=".8"/>
<rect x="59.6" y="10.3" width="1.2" height="1.5" fill="#857412" opacity=".8"/>
<rect x="60.8" y="10.3" width="1.2" height="1.5" fill="#6a6a6a" opacity=".8"/>
<rect x="12.8" y="12.3" width="9.6" height="1.5" fill="#54788c" opacity=".8"/>
<rect x="22.4" y="12.3" width="1.2" height="1.5" fill="#6a6a6a" opacity=".8"/>
<rect x="24.8" y="12.3" width="9.6" height="1.5" fill="#7a5646" opacity=".8"/>
<rect x="34.4" y="12.3" width="1.2" height="1.5" fill="#6a6a6a" opacity=".8"/>
<rect x="12.8" y="14.3" width="16.8" height="1.5" fill="#54788c" opacity=".8"/>
<rect x="29.6" y="14.3" width="1.2" height="1.5" fill="#6a6a6a" opacity=".8"/>
<rect x="32.0" y="14.3" width="4.8" height="1.5" fill="#365c7e" opacity=".8"/>
<rect x="36.8" y="14.3" width="1.2" height="1.5" fill="#6a6a6a" opacity=".8"/>
<rect x="12.8" y="18.3" width="8.4" height="1.5" fill="#54788c" opacity=".8"/>
<rect x="21.2" y="18.3" width="1.2" height="1.5" fill="#6a6a6a" opacity=".8"/>
<rect x="23.6" y="18.3" width="1.2" height="1.5" fill="#857412" opacity=".8"/>
<rect x="15.2" y="20.3" width="6.0" height="1.5" fill="#54788c" opacity=".8"/>
<rect x="21.2" y="20.3" width="1.2" height="1.5" fill="#6a6a6a" opacity=".8"/>
<rect x="23.6" y="20.3" width="1.2" height="1.5" fill="#857412" opacity=".8"/>
<rect x="24.8" y="20.3" width="10.8" height="1.5" fill="#7a5646" opacity=".8"/>
<rect x="35.6" y="20.3" width="1.2" height="1.5" fill="#857412" opacity=".8"/>
<rect x="12.8" y="22.3" width="1.2" height="1.5" fill="#857412" opacity=".8"/>
<rect x="14.0" y="22.3" width="1.2" height="1.5" fill="#6a6a6a" opacity=".8"/>
<rect x="12.8" y="24.3" width="2.4" height="1.5" fill="#415c38" opacity=".8"/>
<rect x="16.4" y="24.3" width="8.4" height="1.5" fill="#415c38" opacity=".8"/>
<rect x="26.0" y="24.3" width="4.8" height="1.5" fill="#415c38" opacity=".8"/>
<rect x="32.0" y="24.3" width="2.4" height="1.5" fill="#415c38" opacity=".8"/>
<rect x="12.8" y="26.3" width="21.6" height="1.5" fill="#54788c" opacity=".8"/>
<rect x="34.4" y="26.3" width="1.2" height="1.5" fill="#6a6a6a" opacity=".8"/>
<rect x="36.8" y="26.3" width="10.8" height="1.5" fill="#7a5646" opacity=".8"/>
<rect x="47.6" y="26.3" width="1.2" height="1.5" fill="#6a6a6a" opacity=".8"/>
<rect x="12.8" y="28.3" width="33.6" height="1.5" fill="#54788c" opacity=".8"/>
<rect x="46.4" y="28.3" width="1.2" height="1.5" fill="#6a6a6a" opacity=".8"/>
<rect x="48.8" y="28.3" width="4.8" height="1.5" fill="#365c7e" opacity=".8"/>
<rect x="53.6" y="28.3" width="1.2" height="1.5" fill="#6a6a6a" opacity=".8"/>
<rect x="12.8" y="30.3" width="20.4" height="1.5" fill="#54788c" opacity=".8"/>
<rect x="33.2" y="30.3" width="1.2" height="1.5" fill="#6a6a6a" opacity=".8"/>
<rect x="35.6" y="30.3" width="4.8" height="1.5" fill="#365c7e" opacity=".8"/>
<rect x="40.4" y="30.3" width="1.2" height="1.5" fill="#6a6a6a" opacity=".8"/>
<rect x="12.8" y="32.3" width="20.4" height="1.5" fill="#54788c" opacity=".8"/>
<rect x="33.2" y="32.3" width="1.2" height="1.5" fill="#6a6a6a" opacity=".8"/>
<rect x="35.6" y="32.3" width="8.4" height="1.5" fill="#7a5646" opacity=".8"/>
<rect x="44.0" y="32.3" width="1.2" height="1.5" fill="#6a6a6a" opacity=".8"/>
<rect x="12.8" y="34.3" width="9.6" height="1.5" fill="#54788c" opacity=".8"/>
<rect x="22.4" y="34.3" width="1.2" height="1.5" fill="#6a6a6a" opacity=".8"/>
<rect x="24.8" y="34.3" width="4.8" height="1.5" fill="#365c7e" opacity=".8"/>
<rect x="29.6" y="34.3" width="1.2" height="1.5" fill="#6a6a6a" opacity=".8"/>
<rect x="12.8" y="36.3" width="6.0" height="1.5" fill="#54788c" opacity=".8"/>
<rect x="18.8" y="36.3" width="1.2" height="1.5" fill="#6a6a6a" opacity=".8"/>
<rect x="21.2" y="36.3" width="13.2" height="1.5" fill="#7a5646" opacity=".8"/>
<rect x="34.4" y="36.3" width="1.2" height="1.5" fill="#6a6a6a" opacity=".8"/>
<rect x="12.8" y="40.3" width="2.4" height="1.5" fill="#415c38" opacity=".8"/>
<rect x="16.4" y="40.3" width="8.4" height="1.5" fill="#415c38" opacity=".8"/>
<rect x="26.0" y="40.3" width="2.4" height="1.5" fill="#415c38" opacity=".8"/>
<rect x="12.8" y="42.3" width="9.6" height="1.5" fill="#54788c" opacity=".8"/>
<rect x="22.4" y="42.3" width="1.2" height="1.5" fill="#6a6a6a" opacity=".8"/>
<rect x="24.8" y="42.3" width="4.8" height="1.5" fill="#365c7e" opacity=".8"/>
<rect x="29.6" y="42.3" width="1.2" height="1.5" fill="#6a6a6a" opacity=".8"/>
<rect x="12.8" y="44.3" width="19.2" height="1.5" fill="#54788c" opacity=".8"/>
<rect x="32.0" y="44.3" width="1.2" height="1.5" fill="#6a6a6a" opacity=".8"/>
<rect x="34.4" y="44.3" width="4.8" height="1.5" fill="#365c7e" opacity=".8"/>
<rect x="39.2" y="44.3" width="1.2" height="1.5" fill="#6a6a6a" opacity=".8"/>
<rect x="12.8" y="46.3" width="24.0" height="1.5" fill="#54788c" opacity=".8"/>
<rect x="36.8" y="46.3" width="1.2" height="1.5" fill="#6a6a6a" opacity=".8"/>
<rect x="39.2" y="46.3" width="4.8" height="1.5" fill="#365c7e" opacity=".8"/>
<rect x="44.0" y="46.3" width="1.2" height="1.5" fill="#6a6a6a" opacity=".8"/>
<rect x="12.8" y="48.3" width="33.6" height="1.5" fill="#54788c" opacity=".8"/>
<rect x="46.4" y="48.3" width="1.2" height="1.5" fill="#6a6a6a" opacity=".8"/>
<rect x="48.8" y="48.3" width="4.8" height="1.5" fill="#365c7e" opacity=".8"/>
<rect x="53.6" y="48.3" width="1.2" height="1.5" fill="#6a6a6a" opacity=".8"/>
<rect x="12.8" y="50.3" width="36.0" height="1.5" fill="#54788c" opacity=".8"/>
<rect x="48.8" y="50.3" width="1.2" height="1.5" fill="#6a6a6a" opacity=".8"/>
<rect x="51.2" y="50.3" width="4.8" height="1.5" fill="#365c7e" opacity=".8"/>
<rect x="10.4" y="52.3" width="1.2" height="1.5" fill="#857412" opacity=".8"/>
<rect x="11.6" y="52.3" width="1.2" height="1.5" fill="#6a6a6a" opacity=".8"/>
<rect x="10.4" y="54.3" width="10.8" height="1.5" fill="#54788c" opacity=".8"/>
<rect x="21.2" y="54.3" width="1.2" height="1.5" fill="#6a6a6a" opacity=".8"/>
<rect x="23.6" y="54.3" width="1.2" height="1.5" fill="#857412" opacity=".8"/>
<rect x="24.8" y="54.3" width="6.0" height="1.5" fill="#7a5646" opacity=".8"/>
<rect x="30.8" y="54.3" width="1.2" height="1.5" fill="#857412" opacity=".8"/>
<rect x="8.0" y="56.3" width="1.2" height="1.5" fill="#857412" opacity=".8"/>
<rect x="6" y="4" width="64" height="2.2" fill="#b01c1c" opacity=".85"/><rect x="12" y="4" width="21" height="2.2" fill="#e02424"/>
<rect x="59" y="4" width="11" height="2.2" fill="#3794ff"/>
<rect x="6" y="50" width="64" height="2.2" fill="#a81c1c" opacity=".8"/><rect x="12" y="50" width="38" height="2.2" fill="#dc2424"/>
<rect x="2" y="18" width="2.4" height="6" fill="#2ea043"/>
</svg>
</div>
<div class="abs" style="left:2232px;top:1031px;font-family:'Liberation Sans','Noto Sans CJK SC',sans-serif;font-size:24.5px;line-height:36px;color:#d4d4d4;white-space:nowrap">掘金技术社区 @ 前端Y酱</div>
</body></html>
